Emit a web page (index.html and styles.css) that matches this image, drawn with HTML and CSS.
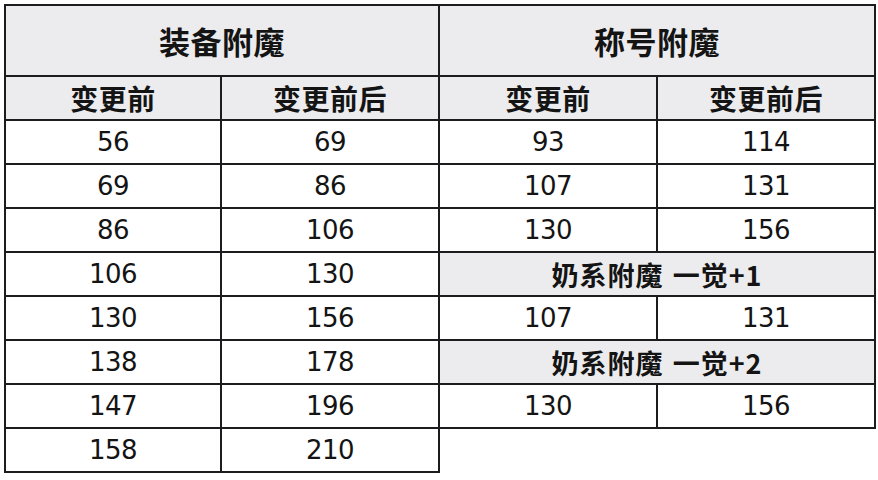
FILE: index.html
```html
<!DOCTYPE html>
<html lang="zh">
<head>
<meta charset="utf-8">
<link rel="stylesheet" href="styles.css">
</head>
<body>
<table class="grid">
  <colgroup>
    <col class="c1"><col class="c2"><col class="c3"><col class="c4">
  </colgroup>
  <tr class="head">
    <th colspan="2">装备附魔</th>
    <th colspan="2">称号附魔</th>
  </tr>
  <tr class="sub">
    <th>变更前</th><th>变更前后</th><th>变更前</th><th>变更前后</th>
  </tr>
  <tr class="row"><td>56</td><td>69</td><td>93</td><td>114</td></tr>
  <tr class="row"><td>69</td><td>86</td><td>107</td><td>131</td></tr>
  <tr class="row"><td>86</td><td>106</td><td>130</td><td>156</td></tr>
  <tr class="row"><td>106</td><td>130</td><th class="sec" colspan="2">奶系附魔 一觉+1</th></tr>
  <tr class="row"><td>130</td><td>156</td><td>107</td><td>131</td></tr>
  <tr class="row"><td>138</td><td>178</td><th class="sec" colspan="2">奶系附魔 一觉+2</th></tr>
  <tr class="row"><td>147</td><td>196</td><td>130</td><td>156</td></tr>
  <tr class="row"><td>158</td><td>210</td><td class="empty" colspan="2"></td></tr>
</table>
</body>
</html>
```
FILE: styles.css
```css
html, body {
  margin: 0;
  padding: 0;
  background: #ffffff;
}
body {
  padding: 4px 0 0 4px;
}
.grid {
  border-collapse: collapse;
  table-layout: fixed;
  width: 872px;
  color: #141414;
}
.c1 { width: 216px; }
.c2 { width: 218px; }
.c3 { width: 218px; }
.c4 { width: 218px; }
.grid th, .grid td {
  border: 2px solid #1c1c1e;
  text-align: center;
  vertical-align: middle;
  padding: 0;
}
.grid th {
  font-family: "Noto Sans CJK SC", "Noto Sans", sans-serif;
  font-weight: 700;
  background: #ececee;
}
.head th {
  height: 69px;
  font-size: 31px;
  letter-spacing: 0.5px;
}
.sub th {
  height: 42px;
  font-size: 28px;
  letter-spacing: 0.5px;
}
.row td, .row th {
  height: 42px;
}
.row td {
  font-family: "DejaVu Sans", sans-serif;
  font-size: 26px;
  letter-spacing: -0.5px;
  background: #ffffff;
}
.row th.sec {
  font-size: 27px;
  letter-spacing: 1px;
  word-spacing: 2px;
}
.row td.empty {
  border-right: none;
  border-bottom: none;
  background: #ffffff;
}
```
